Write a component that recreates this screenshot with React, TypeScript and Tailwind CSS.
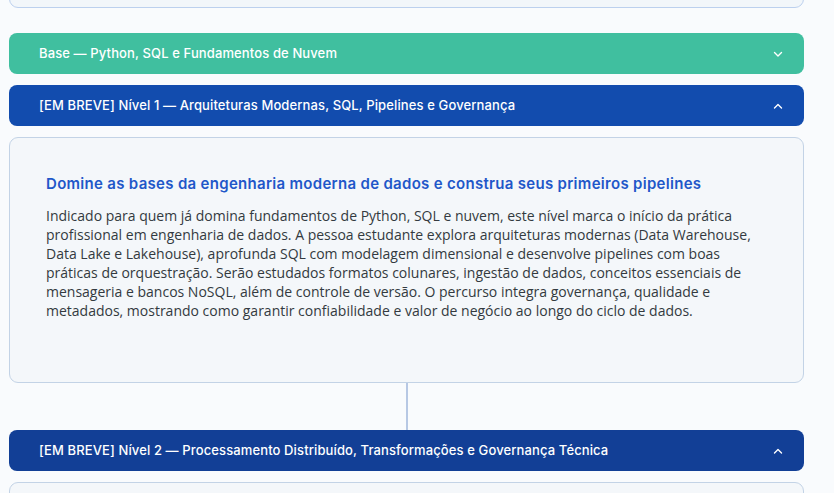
import React from "react";

const Chevron = ({ up }: { up?: boolean }) => (
  <svg width="12" height="12" viewBox="0 0 12 12" fill="none" stroke="white" strokeWidth="1.4" strokeLinecap="round" strokeLinejoin="round">
    {up ? <path d="M2.5 8 L6 4.5 L9.5 8" /> : <path d="M2.5 4.5 L6 8 L9.5 4.5" />}
  </svg>
);

const Header = ({ label, bg, up }: { label: string; bg: string; up?: boolean }) => (
  <div className={`flex h-[41px] items-center justify-between rounded-[8px] pl-[30px] pr-[20px] ${bg}`}>
    <span className="text-[13px] font-medium tracking-[0.12px] text-white">{label}</span>
    <Chevron up={up} />
  </div>
);

export default function App() {
  return (
    <div className="h-[493px] w-[834px] overflow-hidden bg-[#f9fbfd] font-['Inter',sans-serif]">
      <div className="w-[804px] pl-[9px]">
        <div className="-mt-[40px] h-[48px] rounded-[9px] border border-[#bcd0ee] bg-[#f2f6fa]" />
        <div className="mt-[25px]">
          <Header label="Base — Python, SQL e Fundamentos de Nuvem" bg="bg-[#40bf9f]" />
        </div>
        <div className="mt-[11px]">
          <Header label="[EM BREVE] Nível 1 — Arquiteturas Modernas, SQL, Pipelines e Governança" bg="bg-[#124cae]" up />
        </div>
        <div className="mt-[11px] h-[246px] rounded-[9px] border border-[#c3d3e6] bg-[#f4f7fa] px-[36px] pt-[36px]">
          <h3 className="text-[15px] font-semibold leading-[20px] tracking-[0.3px] text-[#1f57c9]">
            Domine as bases da engenharia moderna de dados e construa seus primeiros pipelines
          </h3>
          <p className="mt-[12px] font-['Open_Sans',sans-serif] text-[14px] leading-[19px] text-[#333a40]">
            Indicado para quem já domina fundamentos de Python, SQL e nuvem, este nível marca o início da prática
            profissional em engenharia de dados. A pessoa estudante explora arquiteturas modernas (Data Warehouse,
            Data Lake e Lakehouse), aprofunda SQL com modelagem dimensional e desenvolve pipelines com boas
            práticas de orquestração. Serão estudados formatos colunares, ingestão de dados, conceitos essenciais de
            mensageria e bancos NoSQL, além de controle de versão. O percurso integra governança, qualidade e
            metadados, mostrando como garantir confiabilidade e valor de negócio ao longo do ciclo de dados.
          </p>
        </div>
        <div className="flex justify-center">
          <div className="h-[47px] w-[2px] bg-[#b7c8e4]" />
        </div>
        <Header label="[EM BREVE] Nível 2 — Processamento Distribuído, Transformações e Governança Técnica" bg="bg-[#123f96]" up />
        <div className="mt-[11px] h-[40px] rounded-[9px] border border-[#c3d3e6] bg-[#f4f7fa]" />
      </div>
    </div>
  );
}
